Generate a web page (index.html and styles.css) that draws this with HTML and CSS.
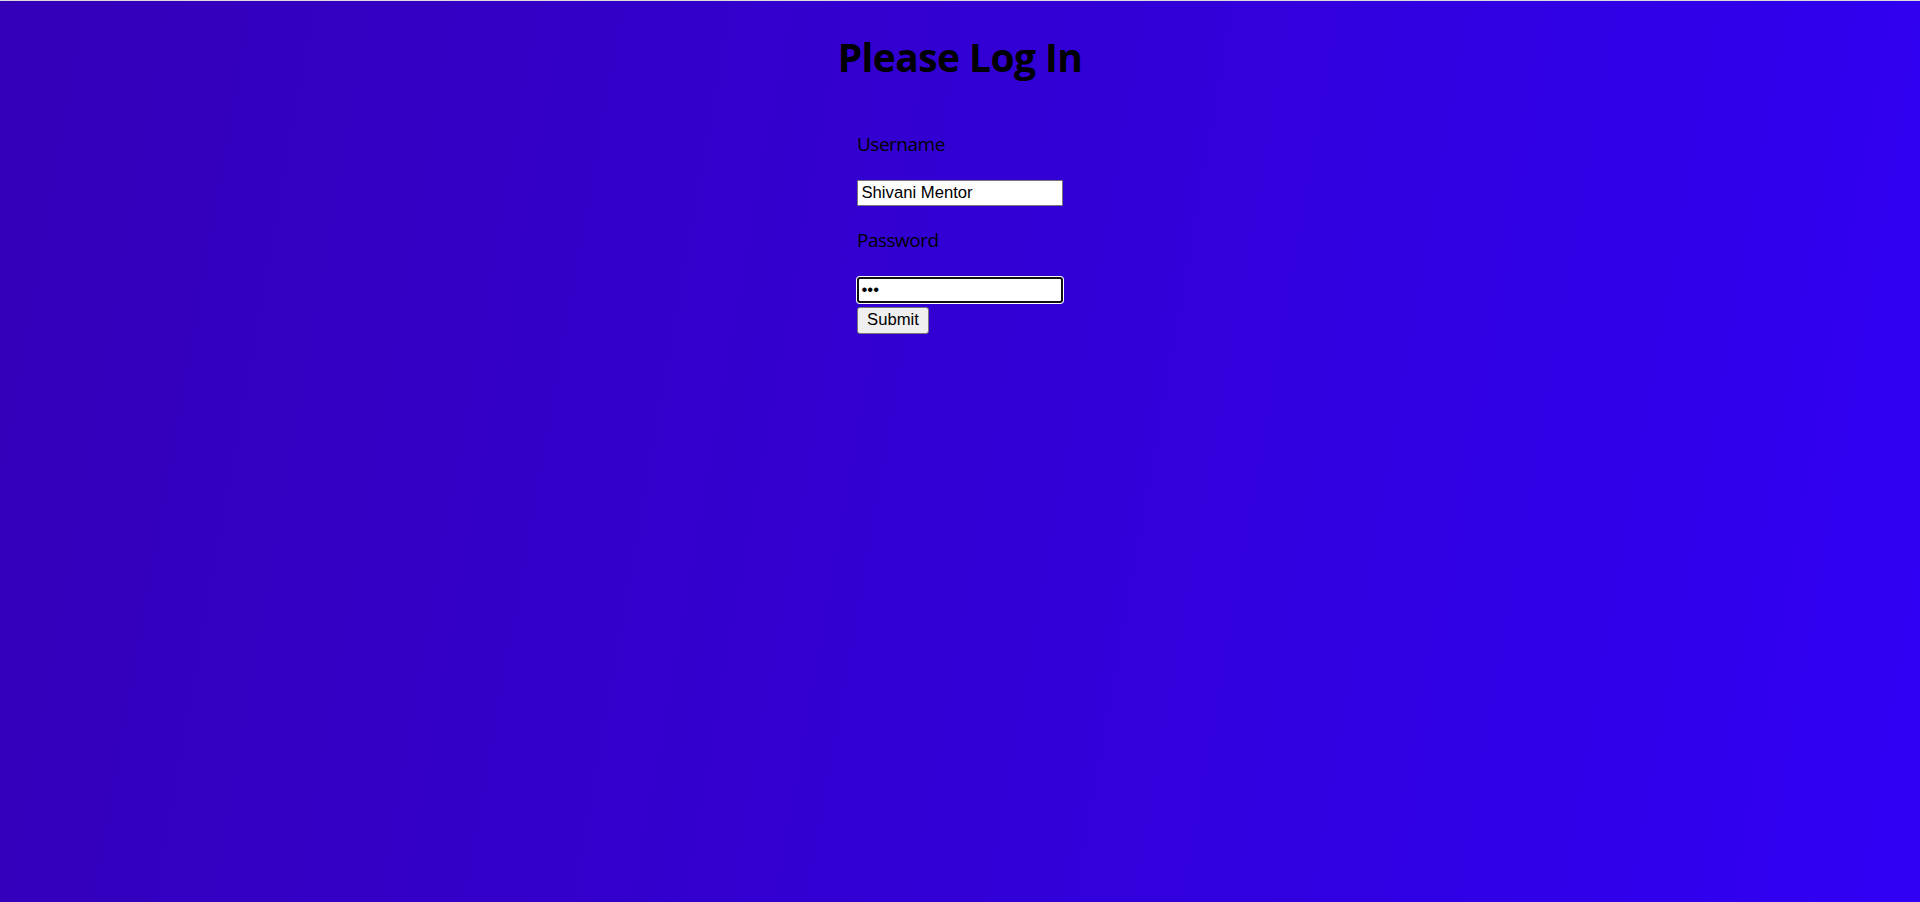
FILE: index.html
```html
<!DOCTYPE html>
<html lang="en">
<head>
<meta charset="utf-8">
<title>Please Log In</title>
<link rel="stylesheet" href="styles.css">
</head>
<body>
<div class="topline"></div>
<main class="page">
  <h1 class="title">Please Log In</h1>
  <form class="login-form">
    <label class="field-label" for="username">Username</label>
    <input class="field-input" id="username" type="text" value="Shivani Mentor">
    <label class="field-label label-password" for="password">Password</label>
    <input class="field-input input-focused" id="password" type="password" value="abc">
    <button class="submit-btn" type="button">Submit</button>
  </form>
</main>
</body>
</html>
```
FILE: styles.css
```css
html, body {
  margin: 0;
  padding: 0;
}

body {
  font-family: "Open Sans", "Noto Sans", sans-serif;
  color: #000;
}

.topline {
  height: 1px;
  background: #dcdcdc;
}

.page {
  height: calc(100vh - 1px);
  background: linear-gradient(100deg, #3500b8 0%, #3200d4 50%, #2f00f4 100%);
  display: flex;
  flex-direction: column;
  align-items: center;
  overflow: hidden;
}

.title {
  margin: 29px 0 0;
  font-size: 39px;
  line-height: 54px;
  height: 54px;
  font-weight: 700;
  letter-spacing: -0.6px;
  text-align: center;
}

.login-form {
  display: flex;
  flex-direction: column;
  align-items: flex-start;
  width: 206px;
  margin-top: 46.5px;
}

.field-label {
  font-size: 19px;
  line-height: 27px;
  height: 27px;
  font-weight: 400;
  letter-spacing: -0.5px;
}

.label-password {
  margin-top: 21px;
}

.field-input {
  box-sizing: border-box;
  width: 206px;
  height: 26.3px;
  margin: 22.5px 0 0;
  padding: 1px 3.5px;
  border: 1px solid #767676;
  border-radius: 1px;
  background: #fff;
  font-family: "Liberation Sans", Arial, sans-serif;
  font-size: 16.67px;
  color: #000;
  outline: none;
}

.input-focused {
  border: 2px solid #101010;
  border-radius: 3px;
  box-shadow: 0 0 0 1px #fff;
  padding: 0 2.5px;
}

.submit-btn {
  box-sizing: border-box;
  margin-top: 3.5px;
  width: 72px;
  height: 27px;
  padding: 1px 7px;
  background: #efefef;
  border: 1px solid #767676;
  border-radius: 3px;
  font-family: "Liberation Sans", Arial, sans-serif;
  font-size: 16.67px;
  color: #000;
  text-align: center;
}
```
